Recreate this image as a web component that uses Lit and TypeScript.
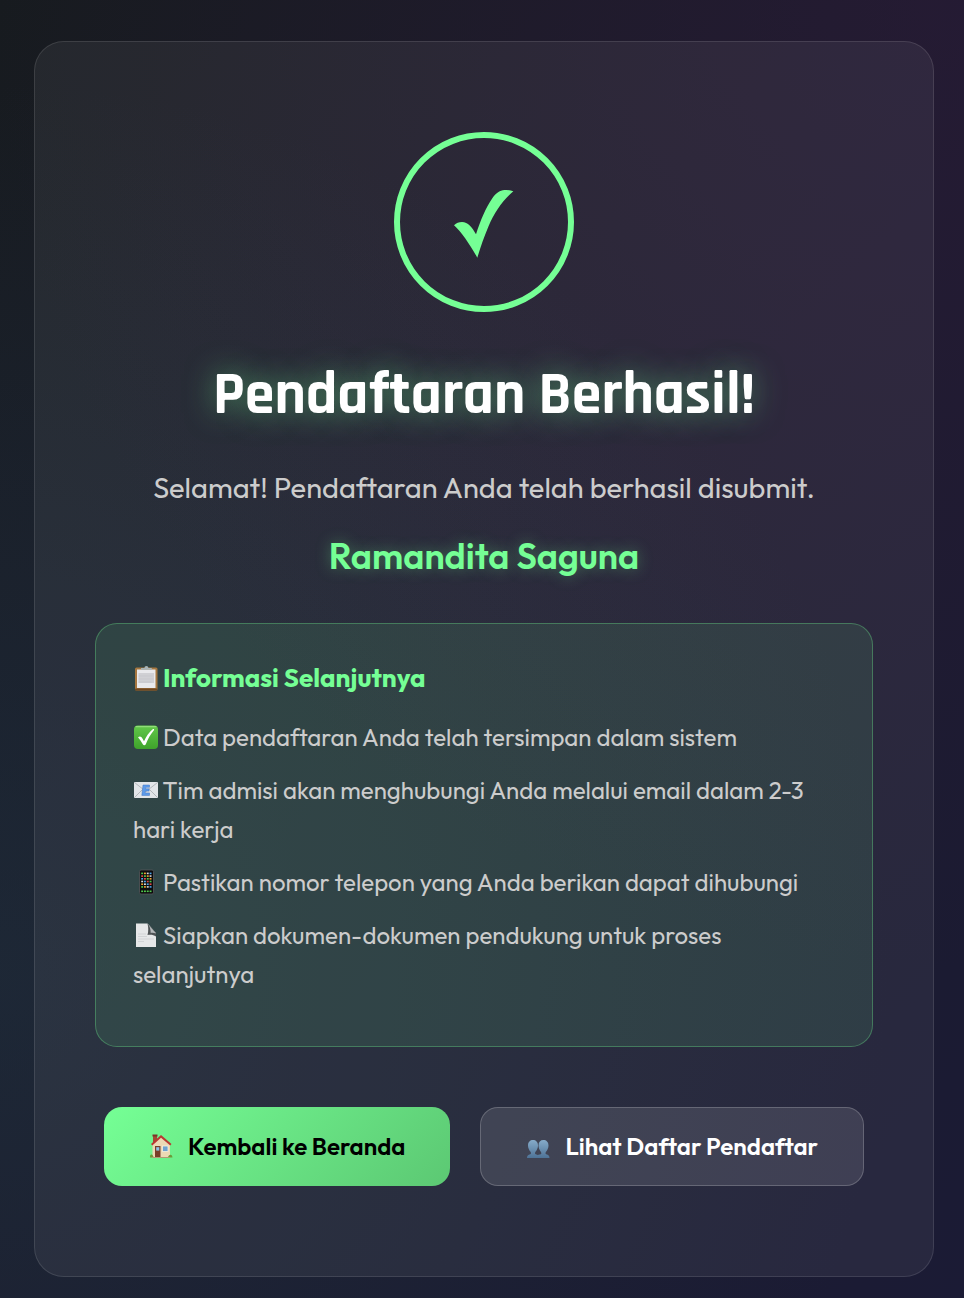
import { LitElement, html, css, svg } from "lit";
import { customElement } from "lit/decorators.js";

const clipboard = svg`
  <rect x="2" y="2.500" width="22.500" height="23" rx="1.5" fill="#a5763f"/>
  <rect x="2" y="23.500" width="22.500" height="2" rx="1" fill="#6f4620"/>
  <rect x="4" y="4.500" width="18.500" height="18.500" fill="#e9e9ec"/>
  <rect x="5.500" y="8" width="15.500" height="10" fill="#d0d0d4"/>
  <path d="M8 4.700V3h3.400a2 2 0 0 1 4 0h3.400v1.700z" fill="#a9b4b6"/>
  <path d="M5.500 11h14M5.500 14h15M5.500 17h13" stroke="#c6c6ca" stroke-width=".7"/>`;
const checked = svg`
  <defs><linearGradient id="g" x2="0" y2="1"><stop stop-color="#62c84a"/><stop offset="1" stop-color="#3fa32b"/></linearGradient></defs>
  <rect x="1" y="1.5" width="24" height="23.5" rx="4" fill="url(#g)"/>
  <rect x="2.500" y="2" width="21" height="1.200" rx=".6" fill="#90dd79"/>
  <path d="M5 13.300c1.800-1.600 3.200-1 4.300 1l1.700 3C13.300 12 16 8.200 19.700 5.200c1-.6 1.900.1 1.200 1.100C17.500 10.500 14.800 15 12.800 20.300c-.6 1.200-2.400 1.200-3 0C8.300 17.500 6.700 15.200 5 13.300z" fill="#fff"/>`;
const email = svg`
  <rect x="1" y="5" width="24" height="16" rx="1" fill="#e2e5e8"/>
  <path d="M1.500 5.500l11.500 9 11.500-9M1.500 20.500l8-8M24.500 20.500l-8-8" fill="none" stroke="#b3b7bb" stroke-width="1"/>
  <path d="M10 8h6.500v2.300h-3.700l-.2 1.500h3.500v2.300h-3.700l-.2 1.800h4.300v2.500H8.800z" fill="#5d9bea" stroke="#3f73bd" stroke-width=".5"/>`;
const dots = ["#51c94d", "#4aa5ec", "#f0a32e", "#df4b4b", "#d8d8d8"];
const phone = svg`
  <rect x="6.500" y="1" width="14" height="24" rx="1.500" fill="#0c0c0e" stroke="#55575a" stroke-width=".8"/>
  ${[0, 1, 2, 3, 4, 5, 6].map((r) => [0, 1, 2, 3].map((c) => svg`
    <rect x=${8.2 + c * 2.8} y=${r === 6 ? 21.5 : 3.6 + r * 2.7} width="1.900" height="1.600" fill=${r === 6 ? dots[0] : dots[(r * 3 + c * 2) % 5]}/>`))}`;
const page = svg`
  <path d="M3 1.500h11.500l8.500 9.500v14H3z" fill="#e6e7e8"/>
  <path d="M14.500 1.500L23 11v3.500c-2.500-1.800-5-2.200-8.500-1.600 1-3.500 1-7.500 0-11.400z" fill="#4e5254"/>
  <path d="M14.500 1.500L23 11.500c-2-.8-3.500-.9-5.300-.6C17.700 7 16.700 4 14.500 1.500z" fill="#b5b8ba"/>
  <path d="M5 12h8M5 14.500h9M5 17h16M5 19.500h6" stroke="#cdcfd0" stroke-width=".8"/>`;
const house = svg`
  <path d="M4 1h4v8H4z" fill="#a24a35"/><path d="M3.500 .5h5v2h-5z" fill="#7d3327"/>
  <path d="M3.500 9.500L12 2.500l9 7V23h-17.500z" fill="#ecd9b4"/>
  <path d="M2 10L12 1l10.500 9-1.300 1.400L12 3.800l-8.700 7.600z" fill="#b93832"/>
  <rect x="6" y="12" width="5.500" height="11" fill="#7a3e28"/>
  <rect x="7.200" y="13.200" width="3.100" height="3.400" fill="#8ec3e8"/>
  <rect x="13.500" y="12" width="5.500" height="5.500" fill="#6fa3d0" stroke="#f8f1de" stroke-width=".8"/>
  <path d="M1 23.500c-.5-3 2-4 3-1.500l1 1.500zM19 23.500c.5-3 4-4 4.500 0z" fill="#6d9a39"/>
  <path d="M3 23h18v1H3z" fill="#b09a73"/>`;
const people = svg`
  <defs><linearGradient id="p" x2="0" y2="1"><stop stop-color="#86abc9"/><stop offset="1" stop-color="#4e7397"/></linearGradient></defs>
  <path d="M11.500 24V21l3.300-.8c.9-.3.600-1.600 0-2.400-1.400-2-2.300-4.400-2.300-6.400 0-3.500 2-5.400 4.900-5.400s5.100 1.900 5.100 5.400c0 2.400-1 4.400-2.500 6.400-.6.900-.8 2.100.2 2.400 2.200.6 3.300 1.200 3.300 3.800z" fill="url(#p)"/>
  <path d="M1 24c0-2.600 1.100-3.200 3.300-3.800 1-.3.800-1.500.2-2.400C3 15.800 2 13.800 2 11.400 2 7.900 4.200 6 7 6s5 1.900 5 5.400c0 2.400-1 4.400-2.500 6.400-.6.900-.8 2.100.2 2.400 2.200.6 3.300 1.200 3.300 3.800z" fill="url(#p)"/>`;

const icon = (body: unknown) =>
  html`<svg class="icon" viewBox="0 0 25 26" aria-hidden="true">${body}</svg>`;

const steps = [
  { icon: checked, text: "Data pendaftaran Anda telah tersimpan dalam sistem" },
  { icon: email, text: "Tim admisi akan menghubungi Anda melalui email dalam 2-3 hari kerja" },
  { icon: phone, text: "Pastikan nomor telepon yang Anda berikan dapat dihubungi" },
  { icon: page, text: "Siapkan dokumen-dokumen pendukung untuk proses selanjutnya" },
];

@customElement("app-root")
export class AppRoot extends LitElement {
  static styles = css`
    :host {
      display: block;
      box-sizing: border-box;
      min-height: 100vh;
      padding: 41px 30px 21px 34px;
      font-family: "Outfit", "Lato", sans-serif;
      color: #fff;
      background:
        radial-gradient(circle at 100% 0%, rgba(56, 27, 70, 0.35), transparent 60%),
        radial-gradient(circle at 0% 75%, rgba(32, 52, 66, 0.5), transparent 65%),
        linear-gradient(135deg, #171b1f 0%, #1b1b2b 50%, #1b1b35 100%);
    }
    .card {
      box-sizing: border-box;
      max-width: 900px;
      margin: 0 auto;
      padding: 90px 60px;
      border: 1px solid rgba(255, 255, 255, 0.11);
      border-radius: 30px;
      background: rgba(255, 255, 255, 0.06);
      text-align: center;
    }
    .badge {
      box-sizing: border-box;
      display: grid;
      place-items: center;
      width: 180px;
      height: 180px;
      margin: 0 auto 49px;
      border: 6px solid #75ff95;
      border-radius: 50%;
    }
    .tick {
      width: 60px;
      height: 72px;
      fill: #75ff95;
    }
    .title {
      margin: 0 0 34px;
      font-family: "Rajdhani", "Roboto", sans-serif;
      font-size: 60px;
      font-weight: 700;
      line-height: 70px;
      text-shadow: 0 0 30px rgba(117, 255, 149, 0.5);
    }
    .lead {
      margin: 0 0 22px;
      font-size: 29px;
      line-height: 46px;
      color: #ccc;
    }
    .name {
      margin: 0 0 44px;
      font-size: 36px;
      font-weight: 600;
      line-height: 46px;
      color: #75ff95;
      text-shadow: 0 0 15px rgba(117, 255, 149, 0.35);
    }
    .info {
      padding: 36px 37px 38px;
      border: 1px solid rgba(117, 255, 149, 0.3);
      border-radius: 22px;
      background: rgba(117, 255, 149, 0.1);
      text-align: left;
    }
    .info-title {
      margin: 0 0 22px;
      font-size: 26px;
      font-weight: 700;
      line-height: 36px;
      color: #75ff95;
    }
    .steps {
      margin: 0;
      padding: 0;
      list-style: none;
      font-size: 24px;
      line-height: 39px;
      color: #ccc;
    }
    .step {
      margin-bottom: 14px;
    }
    .icon {
      width: 25px;
      height: 26px;
      vertical-align: -4px;
    }
    .actions {
      display: flex;
      flex-wrap: wrap;
      justify-content: center;
      gap: 30px;
      margin-top: 60px;
    }
    .button {
      display: flex;
      align-items: center;
      gap: 14px;
      padding: 20px 45px;
      border: 0;
      border-radius: 18px;
      font-family: inherit;
      font-size: 24px;
      font-weight: 600;
      line-height: 39px;
      cursor: pointer;
    }
    .primary {
      color: #000;
      background: linear-gradient(135deg, #75ff95, #5cc873);
    }
    .secondary {
      padding: 19px 45px;
      border: 1px solid rgba(255, 255, 255, 0.2);
      color: #fff;
      background: rgba(255, 255, 255, 0.11);
    }
  `;

  render() {
    return html`
      <main class="card">
        <div class="badge">
          <svg class="tick" viewBox="222 198 180 216" role="img" aria-label="Berhasil">
            <path d="M222 316C230 309 236 306 246 306C264 307 276 321 288 343C302 299 318 263 336 236C350 214 366 210 378 210Q390 210 400 214C366 243 344 277 325 320C311 353 301 383 292 413C269 373 245 337 222 316Z" />
          </svg>
        </div>
        <h1 class="title">Pendaftaran Berhasil!</h1>
        <p class="lead">Selamat! Pendaftaran Anda telah berhasil disubmit.</p>
        <p class="name">Ramandita Saguna</p>
        <section class="info">
          <h2 class="info-title">${icon(clipboard)} Informasi Selanjutnya</h2>
          <ul class="steps">
            ${steps.map((s) => html`<li class="step">${icon(s.icon)} ${s.text}</li>`)}
          </ul>
        </section>
        <div class="actions">
          <button class="button primary" type="button">${icon(house)}<span>Kembali ke Beranda</span></button>
          <button class="button secondary" type="button">${icon(people)}<span>Lihat Daftar Pendaftar</span></button>
        </div>
      </main>
    `;
  }
}
